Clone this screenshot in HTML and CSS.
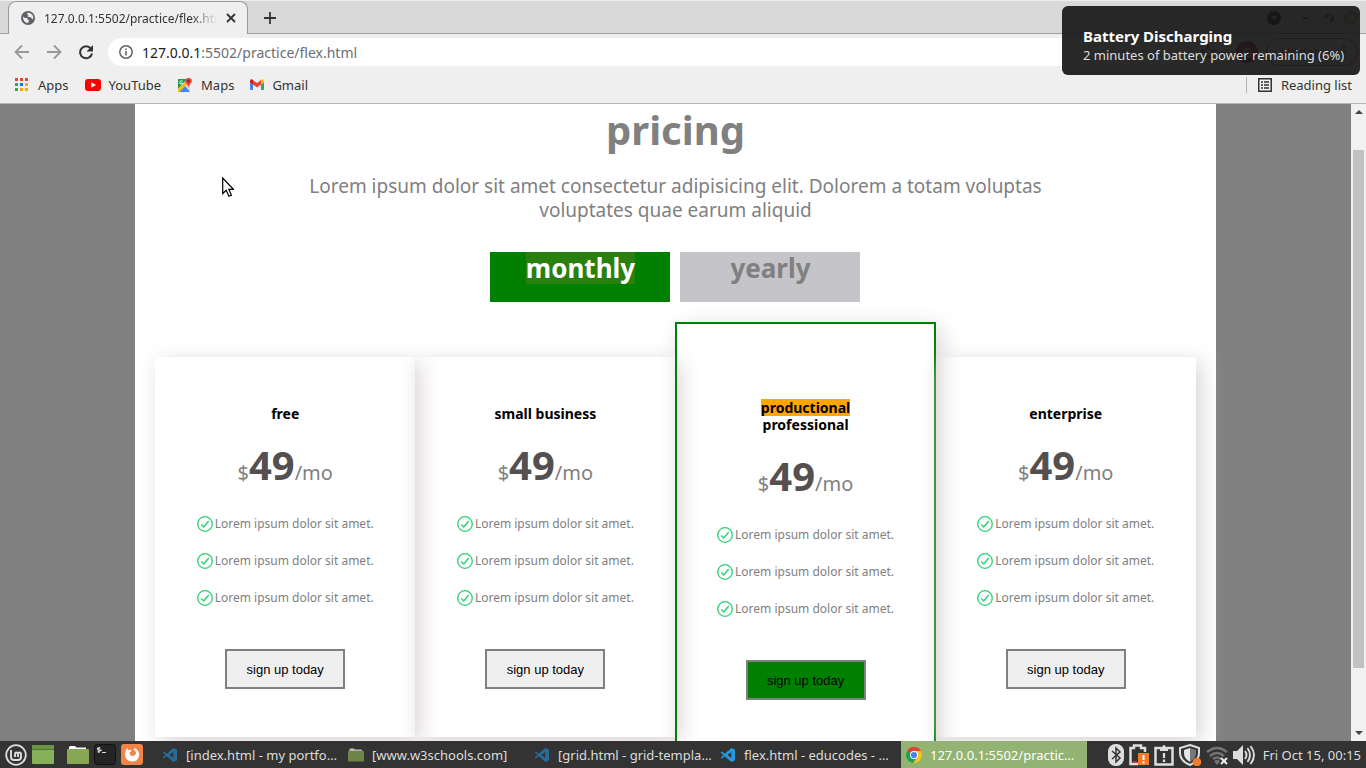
FILE: index.html
```html
<!DOCTYPE html>
<html lang="en">
<head>
<meta charset="utf-8">
<title>Pricing</title>
<link rel="stylesheet" href="styles.css">
</head>
<body>
<svg class="defs" aria-hidden="true">
  <symbol id="check" viewBox="0 0 16 16"><circle cx="8" cy="8" r="7.3" fill="none" stroke="#2bd072" stroke-width="1.3"/><path d="M4.3 8.5l2.5 2.4L11.7 5" fill="none" stroke="#2bd072" stroke-width="1.4"/></symbol>
  <symbol id="code" viewBox="0 0 16 16"><path d="M11.3 1L15 2.6v10.8L11.3 15 4.8 9.2 1.9 11.5.6 10.7 3.5 8 .6 5.3l1.3-.8 2.9 2.3zM11.3 5L7.5 8l3.8 3z" fill="currentColor" fill-rule="evenodd"/></symbol>
  <symbol id="folder" viewBox="0 0 22 18"><path d="M2 3V1.500Q2 0 3.500 0H8l1.500 1.500H19V4H2z" fill="#fff"/><rect y="3" width="22" height="15" rx="1" fill="#87a752"/></symbol>
</svg>
<div class="desktop">
  <header class="browser">
    <div class="tabstrip">
      <div class="tab">
        <svg width="14" height="14" viewBox="0 0 14 14"><circle cx="7" cy="7" r="7" fill="#5f6368"/><path d="M2 5.500l2 1.500h2.500v1.500L8 9.500l-1 2.500Q2 12 2 5.500zM7 1.500l-1 1.800 1.500 1.200L6.500 6H9l3 2.500Q13.500 3 7 1.500z" fill="#efefef"/></svg>
        <span class="tab-title">127.0.0.1:5502/practice/flex.html</span>
        <button class="plain" aria-label="Close tab"><svg width="10" height="10" viewBox="0 0 10 10"><path d="M1 1l8 8M9 1L1 9" stroke="#333" stroke-width="1.800"/></svg></button>
      </div>
      <button class="plain new-tab" aria-label="New tab"><svg width="12" height="12" viewBox="0 0 12 12"><path d="M6 0v12M0 6h12" stroke="#333" stroke-width="1.800"/></svg></button>
      <div class="window-controls">
        <svg width="91" height="14" viewBox="0 0 91 14"><circle cx="7" cy="7" r="7" fill="#000"/><path d="M4 5h6L7 9z" fill="#ccc"/><path d="M35 7h6M59 7V4h3zM66 6v4h-3z" fill="#333" stroke="#333" stroke-width="1.500"/><circle cx="84" cy="7" r="7" fill="#8caf67"/><path d="M81 4l6 6M87 4l-6 6" stroke="#eee" stroke-width="2"/></svg>
      </div>
    </div>
    <div class="toolbar">
      <button class="plain" aria-label="Back"><svg width="16" height="16" viewBox="0 0 16 16"><path d="M15 8H2M8 1.500L1.500 8 8 14.500" fill="none" stroke="#999" stroke-width="1.800"/></svg></button>
      <button class="plain" aria-label="Forward"><svg width="16" height="16" viewBox="0 0 16 16"><path d="M1 8h13M8 1.500L14.500 8 8 14.500" fill="none" stroke="#999" stroke-width="1.800"/></svg></button>
      <button class="plain" aria-label="Reload"><svg width="16" height="16" viewBox="0 0 16 16"><path d="M12.800 4.500A6 6 0 1 0 14 9.500" fill="none" stroke="#333" stroke-width="2"/><path d="M15 1v6.500H8.500z" fill="#333"/></svg></button>
      <div class="address">
        <svg width="14" height="14" viewBox="0 0 14 14"><circle cx="7" cy="7" r="6.200" fill="none" stroke="#5f6368" stroke-width="1.500"/><path d="M7 6v4.500M7 3.500V5" stroke="#5f6368" stroke-width="1.600"/></svg>
        <span class="url" role="textbox" aria-label="Address"><b>127.0.0.1</b>:5502/practice/flex.html</span>
        <svg width="16" height="16" viewBox="0 0 16 16"><path d="M8 1l2 5 5 .5-4 3.300 1.300 5L8 12l-4.300 2.800 1.300-5-4-3.300L6 6z" fill="none" stroke="#555" stroke-width="1.500"/></svg>
      </div>
      <span class="avatar">G</span>
      <button class="update">Update<svg width="4" height="14" viewBox="0 0 4 14"><circle cx="2" cy="2" r="1.500" fill="#c5221f"/><circle cx="2" cy="7" r="1.500" fill="#c5221f"/><circle cx="2" cy="12" r="1.500" fill="#c5221f"/></svg></button>
    </div>
    <nav class="bookmarks">
      <a href="#" class="apps"><svg width="14" height="14" viewBox="0 0 14 14"><path d="M0 0h3v3H0zM5 0h3v3H5zM10 0h3v3h-3z" fill="#ea4335"/><path d="M0 5h3v3H0zM0 10h3v3H0z" fill="#34a853"/><path d="M5 5h3v3H5z" fill="#1a73e8"/><path d="M10 5h3v3h-3zM5 10h3v3H5zM10 10h3v3h-3z" fill="#f9ab00"/></svg>Apps</a>
      <a href="#"><svg width="16" height="12" viewBox="0 0 16 12"><rect width="16" height="12" rx="3" fill="#f00"/><path d="M6.300 3.300v5.400L11 6z" fill="#fff"/></svg>YouTube</a>
      <a href="#"><svg width="16" height="16" viewBox="0 0 16 16"><path d="M1 2h9l3 4v9H1z" fill="#d5d9de"/><path d="M1 2h9L1 12z" fill="#28965a"/><path d="M2 15l6-6 5 6z" fill="#4285f4"/><path d="M1 12L9 4l2 2-9 9H1z" fill="#fbbc04"/><path d="M11.500 1a3.300 3.300 0 0 1 3.300 3.300c0 2-2.800 3.500-3.300 6.200-.5-2.700-3.300-4.200-3.300-6.200A3.300 3.300 0 0 1 11.500 1z" fill="#ea4335"/><circle cx="11.500" cy="4" r="1.200" fill="#8c1d18"/><path d="M5.500 4H4.300a1.500 1.500 0 1 0 1.300 2H4.500" fill="none" stroke="#fff"/></svg>Maps</a>
      <a href="#"><svg width="14" height="12" viewBox="0 0 14 12"><path d="M0 3l3 2v6H1q-1 0-1-1z" fill="#4285f4"/><path d="M14 3l-3 2v6h2q1 0 1-1z" fill="#34a853"/><path d="M3 1l4 3 4-3v4.500L7 8.500l-4-3z" fill="#ea4335"/><path d="M0 3V2Q0 0 2 .2L3 1v4.500L0 3.500z" fill="#c5221f"/><path d="M14 3V2q0-2-2-1.800L11 1v4.500l3-2z" fill="#fbbc04"/></svg>Gmail</a>
      <button class="plain reading"><svg width="14" height="14" viewBox="0 0 14 14"><rect x=".75" y=".75" width="12.500" height="12.500" fill="none" stroke="#333" stroke-width="1.500"/><path d="M3 4h2M3 7h2M3 10h2M6 4h5M6 7h5M6 10h5" stroke="#333" stroke-width="1.400"/></svg>Reading list</button>
    </nav>
  </header>

  <div class="viewport">
    <div class="page">
      <main class="pricing">
        <h1>pricing</h1>
        <p class="lead">Lorem ipsum dolor sit amet consectetur adipisicing elit. Dolorem a totam voluptas voluptates quae earum aliquid</p>
        <div class="periods">
          <button class="period active"><span>monthly</span></button>
          <button class="period"><span>yearly</span></button>
        </div>
        <div class="plans">
          <section class="plan">
            <h2>free</h2>
            <p class="price">$<strong>49</strong>/mo</p>
            <ul><li><svg><use href="#check"/></svg>Lorem ipsum dolor sit amet.</li><li><svg><use href="#check"/></svg>Lorem ipsum dolor sit amet.</li><li><svg><use href="#check"/></svg>Lorem ipsum dolor sit amet.</li></ul>
            <button class="signup">sign up today</button>
          </section>
          <section class="plan">
            <h2>small business</h2>
            <p class="price">$<strong>49</strong>/mo</p>
            <ul><li><svg><use href="#check"/></svg>Lorem ipsum dolor sit amet.</li><li><svg><use href="#check"/></svg>Lorem ipsum dolor sit amet.</li><li><svg><use href="#check"/></svg>Lorem ipsum dolor sit amet.</li></ul>
            <button class="signup">sign up today</button>
          </section>
          <section class="plan featured">
            <h2><mark>productional</mark><br>professional</h2>
            <p class="price">$<strong>49</strong>/mo</p>
            <ul><li><svg><use href="#check"/></svg>Lorem ipsum dolor sit amet.</li><li><svg><use href="#check"/></svg>Lorem ipsum dolor sit amet.</li><li><svg><use href="#check"/></svg>Lorem ipsum dolor sit amet.</li></ul>
            <button class="signup">sign up today</button>
          </section>
          <section class="plan">
            <h2>enterprise</h2>
            <p class="price">$<strong>49</strong>/mo</p>
            <ul><li><svg><use href="#check"/></svg>Lorem ipsum dolor sit amet.</li><li><svg><use href="#check"/></svg>Lorem ipsum dolor sit amet.</li><li><svg><use href="#check"/></svg>Lorem ipsum dolor sit amet.</li></ul>
            <button class="signup">sign up today</button>
          </section>
        </div>
      </main>
    </div>
    <div class="scrollbar">
      <svg width="8" height="4" viewBox="0 0 8 4"><path d="M0 4l4-4 4 4z" fill="#444"/></svg>
      <div class="track"><div class="thumb"></div></div>
      <svg width="8" height="4" viewBox="0 0 8 4"><path d="M0 0l4 4 4-4z" fill="#444"/></svg>
    </div>
  </div>

  <footer class="taskbar">
    <div class="launchers">
      <button class="plain" aria-label="Menu"><svg width="22" height="22" viewBox="0 0 22 22"><circle cx="11" cy="11" r="9.800" fill="none" stroke="#ddd" stroke-width="1.800"/><path d="M6 6v7q0 3 3 3h4q3 0 3-3v-3q0-1.500-1.400-1.500T13 10v3M13 10q0-1.500-1.500-1.500T10 10v3" fill="none" stroke="#ddd" stroke-width="1.900"/></svg></button>
      <button class="plain desk" aria-label="Show desktop"><svg width="22" height="19" viewBox="0 0 22 19"><rect width="22" height="19" rx="1" fill="#87b158"/><path d="M0 0h22v4H0z" fill="#6b9343"/><path d="M0 4.500h22" stroke="#517334"/></svg></button>
      <button class="plain" aria-label="Files"><svg width="22" height="18"><use href="#folder"/></svg></button>
      <button class="plain" aria-label="Terminal"><svg width="22" height="21" viewBox="0 0 22 21"><rect x=".5" y=".5" width="21" height="20" rx="3" fill="#242424" stroke="#111"/><path d="M6.500 4Q3 3.500 3.500 5t3 1.200T3.500 8M5 3v6M8 8.500h4" fill="none" stroke="#ddd" stroke-width="1.100"/></svg></button>
      <button class="plain" aria-label="Firefox"><svg width="22" height="21" viewBox="0 0 22 21"><rect width="22" height="21" rx="3" fill="#f48347"/><path d="M4 11q0-5 2.500-7 0 1.500 1 2.200Q9 5.500 10.500 6q-.5 2-2 2.500.5 4 3.500 3.500t3-3.500q-.5-2-2.500-3Q13 4 14 4q5 3 4 8-1 5.500-7 5.500T4 11z" fill="#fff"/></svg></button>
    </div>
    <div class="tasks">
      <button class="task"><svg class="dim"><use href="#code"/></svg>[index.html - my portfo…</button>
      <button class="task"><svg class="faded"><use href="#folder"/></svg>[www.w3schools.com]</button>
      <button class="task"><svg class="dim"><use href="#code"/></svg>[grid.html - grid-templa…</button>
      <button class="task"><svg class="blue"><use href="#code"/></svg>flex.html - educodes - …</button>
      <button class="task current"><svg viewBox="0 0 16 16"><circle cx="8" cy="8" r="8" fill="#fbc116"/><path d="M8 8L1.100 4A8 8 0 0 1 14.900 4H8z" fill="#dc4437"/><path d="M1.100 4A8 8 0 0 0 7 15.900L11.500 10z" fill="#1aa15f"/><path d="M1.100 4L8 8V4h6.900A8 8 0 0 0 1.100 4z" fill="#dc4437"/><circle cx="8" cy="8" r="4" fill="#fff"/><circle cx="8" cy="8" r="3.100" fill="#4285f4"/></svg>127.0.0.1:5502/practic…</button>
    </div>
    <div class="tray">
      <svg width="16" height="22" viewBox="0 0 16 22"><rect width="16" height="22" rx="7.500" fill="#ddd"/><path d="M4 7l8 7-4 4V4l4 4-8 7" fill="none" stroke="#333" stroke-width="1.500"/></svg>
      <svg width="20" height="22" viewBox="0 0 20 22"><path d="M9 20H1.500V4H5V1.500h7V4h4v4" fill="none" stroke="#ddd" stroke-width="2.500"/><path d="M4 18h4" stroke="#e33" stroke-width="1.500"/><rect x="9" y="9" width="11" height="12" fill="#f4792b"/><path d="M14.500 11v5M14.500 17.500v2" stroke="#fff" stroke-width="2"/></svg>
      <svg width="20" height="22" viewBox="0 0 20 22"><path d="M7 4H1.500v16.500h17V4H13" fill="none" stroke="#ddd" stroke-width="2.500"/><path d="M6 3h2q2-4 4 0h2v4H6z" fill="#ddd"/><path d="M10 9v5M10 15.500V18" stroke="#ddd" stroke-width="2.300"/></svg>
      <svg width="22" height="22" viewBox="0 0 22 22"><path d="M11 1l9 3v5q0 8-9 12Q1 17 1 9V4z" fill="none" stroke="#ddd" stroke-width="2"/><path d="M11 4l6 2v3q0 6-6 9z" fill="#777"/><path d="M11 4L5 6v3q0 6 6 9z" fill="#e5e5e5"/><circle cx="18" cy="18" r="4.300" fill="#f4792b"/></svg>
      <svg width="22" height="20" viewBox="0 0 22 20"><path d="M1 7q10-8 20 0M4 11q7-6 14 0M7 14q4-3 8 0" fill="none" stroke="#747474" stroke-width="2.500"/><path d="M8 16q3-2 6 0l-3 4z" fill="#747474"/><path d="M15 13l6 6M21 13l-6 6" stroke="#eee" stroke-width="2"/></svg>
      <svg width="22" height="20" viewBox="0 0 22 20"><path d="M0 6h4l6-6v20l-6-6H0z" fill="#ddd"/><path d="M12 6q3 4 0 8M14.500 3q5 7 0 14M17.500 1q7 9 0 18" fill="none" stroke="#ddd" stroke-width="1.900"/></svg>
      <time>Fri Oct 15, 00:15</time>
    </div>
  </footer>

  <aside class="notice" role="status">
    <strong>Battery Discharging</strong>
    <span>2 minutes of battery power remaining (6%)</span>
  </aside>
  <svg class="pointer" width="12" height="20" viewBox="0 0 12 20"><path d="M.7 1v15.500l3.500-3.300 2.700 6 2.500-1.100-2.600-5.800h4.600z" fill="#fff" stroke="#000" stroke-width="1.200"/></svg>
</div>
</body>
</html>
```
FILE: styles.css
```css
* { box-sizing: border-box; }
body { margin: 0; font-family: "Noto Sans", sans-serif; font-size: 13px; color: #333; }
h1, h2, p, ul { margin: 0; padding: 0; }
button { font-family: inherit; font-size: inherit; color: inherit; }
svg { flex: none; display: block; }
.defs { display: none; }
.plain { display: flex; align-items: center; padding: 0; border: 0; background: none; }
.desktop { position: relative; display: flex; flex-direction: column; height: 100vh; overflow: hidden; }

.browser { flex: none; background: #efefef; border-bottom: 1px solid #b4b4b4; }
.tabstrip { display: flex; align-items: center; height: 34px; padding-left: 8px; background: #d9d9d9; border-top: 1px solid #eee; box-shadow: inset 0 -1px #a0a0a0; }
.tab { display: flex; align-items: center; gap: 9px; width: 240px; height: 33px; padding: 0 11px 0 12px; background: #efefef; border: 1px solid #999; border-bottom: 0; border-radius: 8px 8px 0 0; font-size: 12px; }
.tab-title { flex: 1; min-width: 0; overflow: hidden; white-space: nowrap; -webkit-mask-image: linear-gradient(90deg, #000 85%, transparent); mask-image: linear-gradient(90deg, #000 85%, transparent); }
.new-tab { margin-left: 16px; }
.window-controls { margin-left: auto; padding-right: 8px; }
.toolbar { display: flex; align-items: center; gap: 16px; height: 36px; padding: 0 8px 0 14px; }
.address { display: flex; flex: 1; align-items: center; gap: 9px; height: 28px; margin-left: -2px; padding: 0 12px 0 11px; border-radius: 14px; background: #fff; font-size: 14px; }
.url { flex: 1; color: #6b6e72; }
.url b { font-weight: 400; color: #222; }
.avatar { width: 22px; border-radius: 50%; background: #a0103c; color: #fff; line-height: 22px; text-align: center; }
.toolbar .avatar { margin: 0 -8px; }
.update { display: flex; align-items: center; justify-content: space-between; width: 92px; height: 28px; padding: 0 11px 0 14px; border: 1px solid #c5221f; border-radius: 14px; background: none; color: #c5221f; }
.bookmarks { display: flex; align-items: center; gap: 16px; height: 33px; padding: 0 14px 3px 15px; }
.bookmarks a { display: flex; align-items: center; gap: 8px; color: #333; text-decoration: none; }
.bookmarks .apps { gap: 9px; }
.reading { gap: 9px; height: 16px; margin-left: auto; padding-left: 11px; border-left: 1px solid #b4b4b4; }

.viewport { display: flex; flex: 1; min-height: 0; }
.page { flex: 1; overflow: hidden; background: gray; }
.pricing { width: 80%; margin: 0 auto; padding: 0 20px 40px; background: #fff; color: gray; text-align: center; }
h1 { font-size: 40px; line-height: 52px; }
.lead { max-width: 780px; margin: 18px auto 0; font-size: 19px; line-height: 24px; }
.periods { display: flex; justify-content: center; gap: 10px; margin-top: 30px; }
.period { display: flex; justify-content: center; align-items: flex-start; width: 180px; height: 50px; padding: 0; border: 0; background: #c5c4c9; color: gray; font-size: 26px; font-weight: 700; line-height: 32px; }
.period.active { background: green; color: #fff; }
.active span { background: #2a800e; }
.plans { display: flex; align-items: center; margin-top: 20px; }
.plan { display: flex; flex-direction: column; align-items: center; justify-content: center; width: 25%; height: 380px; box-shadow: 5px 5px 20px #dad3d4; }
.featured { height: 450px; padding-top: 5px; border: 2px solid green; }
h2 { color: #000; font-size: 14px; line-height: 17px; }
mark { display: inline-block; background: orange; color: #000; }
.price { display: flex; align-items: baseline; height: 46px; margin: 20px 0 17px; font-size: 20px; line-height: 46px; }
.price strong { color: #555050; font-size: 40px; line-height: 46px; }
.plan li { display: flex; align-items: center; gap: 2px; height: 37px; font-size: 12px; }
.plan li svg { width: 16px; height: 16px; }
.signup { width: 120px; height: 40px; margin-top: 33px; border: 2px solid gray; background: #efefef; color: #000; font-family: "Liberation Sans", Arial, sans-serif; font-size: 13px; }
.featured .signup { background: green; }
.scrollbar { display: flex; flex-direction: column; align-items: center; width: 15px; padding: 6px 0; background: #f1f1f1; }
.track { flex: 1; align-self: stretch; padding: 36px 2px 63px; }
.thumb { height: 100%; background: #c1c1c1; }

.taskbar { display: flex; flex: none; align-items: center; height: 27px; background: #333; color: #ddd; }
.launchers { display: flex; align-items: center; gap: 5px; width: 157px; padding-left: 5px; }
.desk { margin-right: 8px; }
.tasks { display: flex; flex: 1; align-self: stretch; max-width: 930px; }
.task { display: flex; flex: 1; align-items: center; gap: 8px; min-width: 0; padding: 0 5px; border: 0; background: none; white-space: nowrap; overflow: hidden; }
.task svg { width: 16px; height: 16px; }
.task.current { background: #92b372; color: #fff; }
.dim { color: #276b96; }
.blue { color: #2499e0; }
.faded { opacity: .7; }
.tray { display: flex; align-items: center; gap: 5px; margin-left: auto; padding-right: 5px; }
.tray time { margin-left: 3px; white-space: nowrap; }

.notice { position: absolute; top: 6px; right: 6px; display: flex; flex-direction: column; width: 298px; height: 69px; padding: 20px 0 0 21px; border-radius: 6px; background: rgba(25, 25, 25, .93); color: #ddd; font-size: 13px; line-height: 18px; white-space: nowrap; }
.notice strong { color: #fff; font-size: 15px; line-height: 20px; }
.pointer { position: absolute; top: 177px; left: 222px; }
```
